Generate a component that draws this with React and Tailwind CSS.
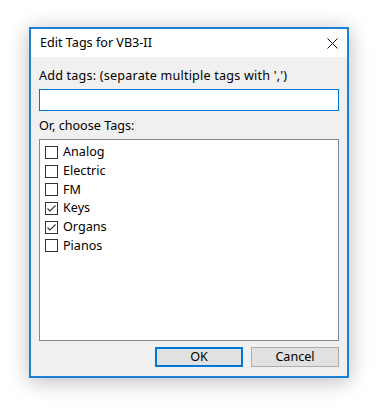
import { useState } from "react";

const tags = [
  { name: "Analog", checked: false },
  { name: "Electric", checked: false },
  { name: "FM", checked: false },
  { name: "Keys", checked: true },
  { name: "Organs", checked: true },
  { name: "Pianos", checked: false },
];

function CheckBox({ checked, onChange }) {
  return (
    <button
      onClick={onChange}
      className="w-[13px] h-[13px] border border-[#333333] bg-white flex items-center justify-center shrink-0"
    >
      {checked && (
        <svg width="11" height="11" viewBox="0 0 11 11">
          <path d="M1.5 5.5 L4 8 L9.5 2.5" fill="none" stroke="#333333" strokeWidth="1.1" />
        </svg>
      )}
    </button>
  );
}

export default function App() {
  const [items, setItems] = useState(tags);
  const [text, setText] = useState("");

  // Toggle one tag on or off
  const toggle = (name) => {
    setItems(items.map((t) => (t.name === name ? { ...t, checked: !t.checked } : t)));
  };

  return (
    <div
      className="min-h-screen bg-white pl-[29px] pt-[27px] text-[12.6px] leading-[16px] text-black"
      style={{ fontFamily: '"Noto Sans", "Liberation Sans", sans-serif' }}
    >
      <div className="w-[320px] h-[351px] border-2 border-[#1c80d6] flex flex-col shadow-[0_3px_20px_rgba(0,0,0,0.28)]">
        {/* Title bar */}
        <div className="h-[28px] bg-white flex items-center justify-between pl-[9px] pr-[9px]">
          <span>Edit Tags for VB3-II</span>
          <svg width="11" height="11" viewBox="0 0 11 11">
            <path d="M0.5 0.5 L10.5 10.5 M10.5 0.5 L0.5 10.5" stroke="#111111" strokeWidth="1" />
          </svg>
        </div>

        {/* Body */}
        <div className="flex-1 bg-[#f0f0f0] px-[8px] pt-[11px] flex flex-col">
          <label className="tracking-[0.2px]">Add tags: (separate multiple tags with ',')</label>
          <input
            type="text"
            value={text}
            onChange={(e) => setText(e.target.value)}
            className="mt-[5px] h-[22px] w-full border border-[#0078d7] bg-white px-1 outline-none"
          />
          <p className="mt-[7px]">Or, choose Tags:</p>
          <div className="mt-[5px] h-[202px] border border-[#828790] bg-white pt-[3px] pl-[5px]">
            {items.map((t) => (
              <div key={t.name} className="h-[18.7px] flex items-center gap-[5px]">
                <CheckBox checked={t.checked} onChange={() => toggle(t.name)} />
                <span>{t.name}</span>
              </div>
            ))}
          </div>
          <div className="mt-[6px] flex justify-end gap-[8px]">
            <button className="w-[88px] h-[20px] bg-[#e1e1e1] border-2 border-[#0078d7] flex items-center justify-center">
              OK
            </button>
            <button className="w-[88px] h-[20px] bg-[#e1e1e1] border border-[#adadad] flex items-center justify-center">
              Cancel
            </button>
          </div>
        </div>
      </div>
    </div>
  );
}
